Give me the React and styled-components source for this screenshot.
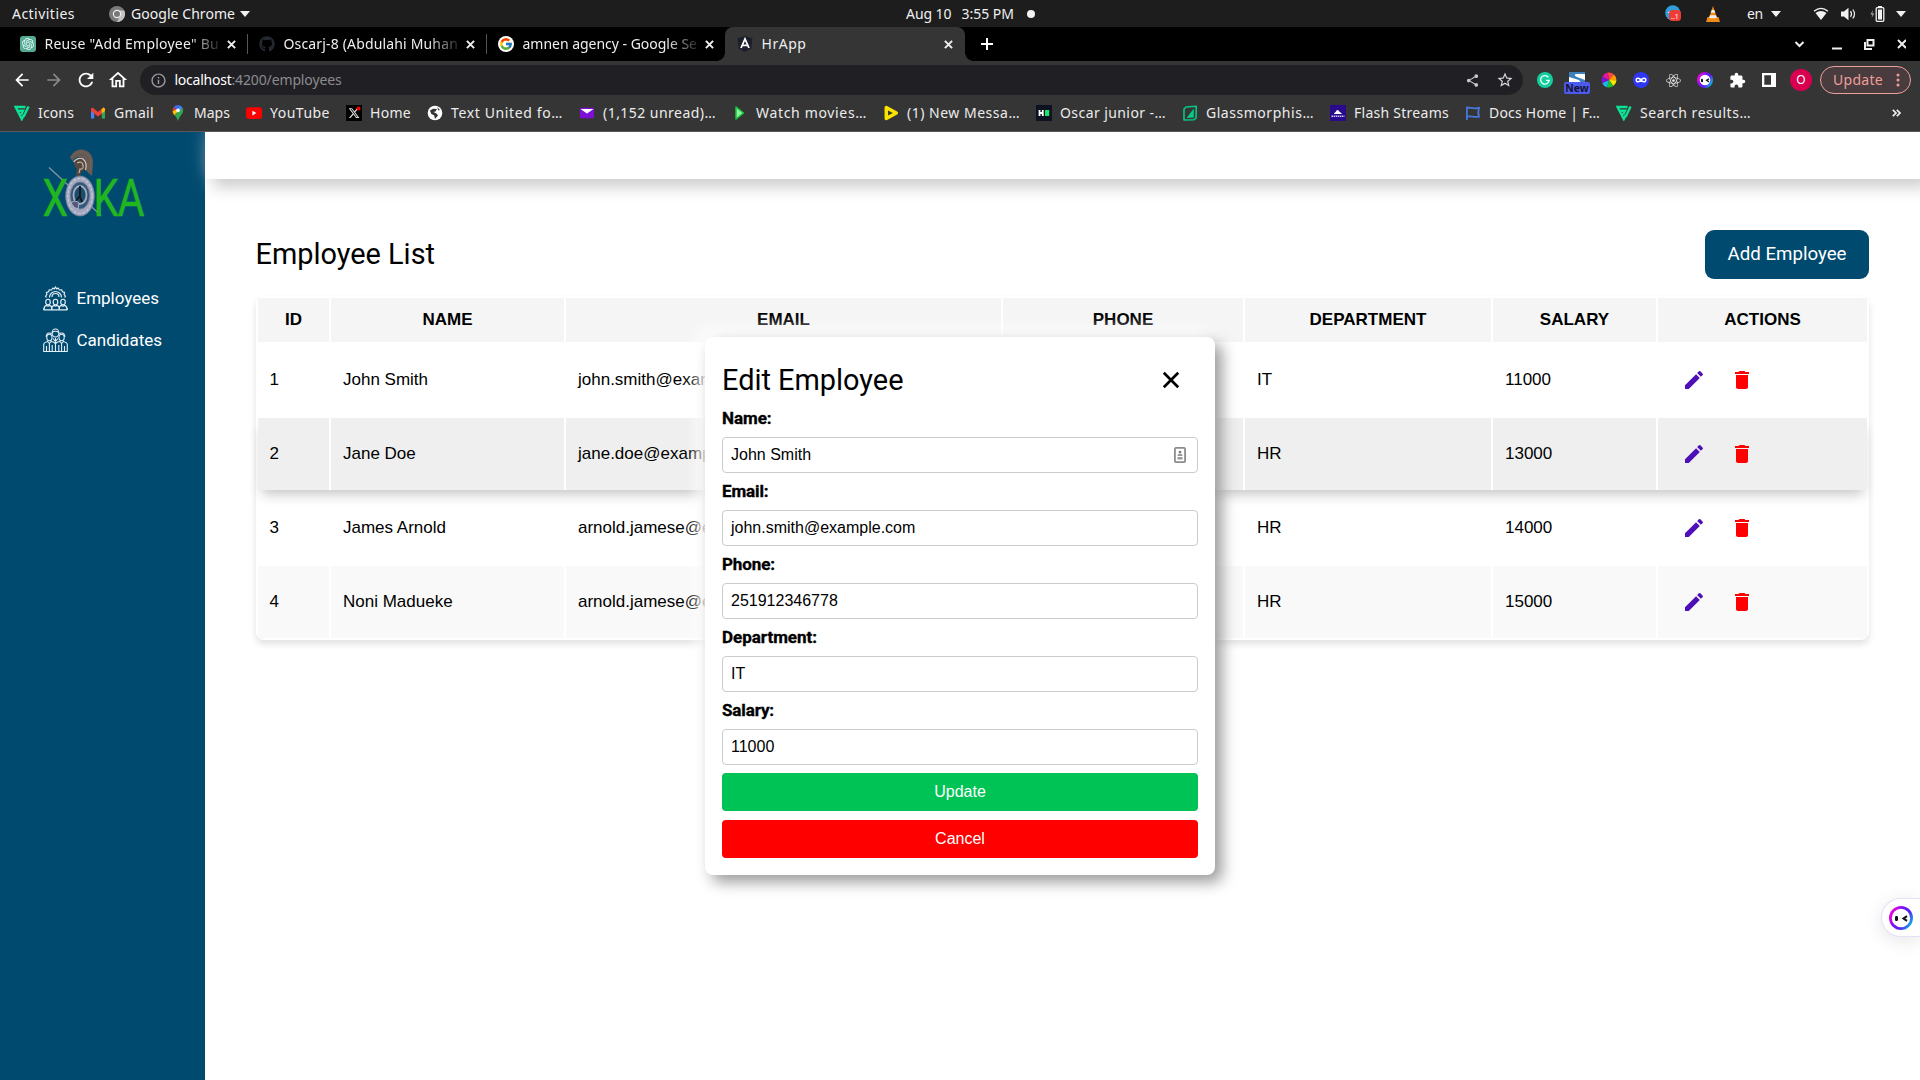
import React, { useLayoutEffect, useRef, useState } from "react";
import styled, { createGlobalStyle, css } from "styled-components";
import { MdEdit, MdDelete, MdArrowBack, MdArrowForward, MdRefresh, MdOutlineHome, MdOutlineInfo, MdShare, MdStarBorder, MdExtension } from "react-icons/md";
import { FaGithub, FaReact, FaXTwitter } from "react-icons/fa6";
import { FcGoogle } from "react-icons/fc";
import { SiOpenai } from "react-icons/si";

const GlobalStyle = createGlobalStyle`
  *, *::before, *::after { box-sizing: border-box; }
  body { margin: 0; background: #fff; overflow: hidden; }
  svg { display: block; flex: none; }
`;

const ui = '"Noto Sans", "Open Sans", sans-serif';
const sans = '"Liberation Sans", Arial, sans-serif';
const roboto = 'Roboto, "Liberation Sans", sans-serif';

/* ---------- text that is tracked to fill a given width ---------- */

const FitBox = styled.span`
  display: block;
  flex: none;
  width: ${(p) => p.$w}px;
  white-space: pre;
`;

function Fit({ w, children, className }) {
  const ref = useRef(null);
  const [spacing, setSpacing] = useState(0);
  useLayoutEffect(() => {
    const natural = ref.current.getBoundingClientRect().width;
    setSpacing((w - natural) / String(children).length);
  }, [w, children]);
  return (
    <FitBox $w={w} className={className}>
      <span ref={ref} style={{ letterSpacing: spacing }}>{children}</span>
    </FitBox>
  );
}

/* ---------- shell ---------- */

const Screen = styled.div`
  position: relative;
  display: flex;
  flex-direction: column;
  width: 1920px;
  height: 1080px;
  overflow: hidden;
  background: #fff;
`;

const Group = styled.div`
  display: flex;
  align-items: center;
  gap: ${(p) => p.$gap || 0}px;
`;

const Gap = styled.div`
  flex: none;
  width: ${(p) => p.$w}px;
`;

/* ---------- desktop bar ---------- */

const DesktopBar = styled.header`
  display: grid;
  grid-template-columns: 906px 1fr auto;
  align-items: center;
  height: 27px;
  padding-right: 14px;
  background: #1d1d1d;
  color: #f0f0f0;
  font: 14px/26px ${ui};
`;

const Dot = styled.i`
  width: 8px;
  height: 8px;
  border-radius: 50%;
  background: #f2f2f2;
`;

const Caret = styled.i`
  border: 5px solid transparent;
  border-top: 6px solid #f2f2f2;
  border-bottom: 0;
`;

/* ---------- tab strip ---------- */

const TabStrip = styled.div`
  display: flex;
  align-items: center;
  height: 34px;
  padding-left: 8px;
  background: #000;
  color: #eee;
  font: 14px/34px ${ui};
`;

const Tab = styled.div`
  position: relative;
  display: flex;
  align-items: center;
  width: ${(p) => p.$w}px;
  height: 34px;
  padding-left: 12px;
  ${(p) =>
    p.$active &&
    css`
      border-radius: 8px 8px 0 0;
      background: #353535;
      &::before,
      &::after {
        content: "";
        position: absolute;
        bottom: 0;
        width: 8px;
        height: 8px;
      }
      &::before {
        left: -8px;
        background: radial-gradient(circle at 0 0, transparent 7.5px, #353535 8px);
      }
      &::after {
        right: -8px;
        background: radial-gradient(circle at 100% 0, transparent 7.5px, #353535 8px);
      }
    `}
  ${(p) =>
    p.$divided &&
    css`
      &::after {
        content: "";
        position: absolute;
        right: -1px;
        top: 7px;
        width: 1px;
        height: 20px;
        background: #555;
      }
    `}
`;

const TabTitle = styled.div`
  width: 175px;
  margin: 0 7.5px 0 8.5px;
  overflow: hidden;
  ${(p) => p.$fade && "mask-image: linear-gradient(90deg, #000 82%, rgba(0,0,0,.12));"}
`;

/* ---------- toolbar ---------- */

const Toolbar = styled.div`
  display: flex;
  align-items: center;
  height: 38px;
  padding-left: 12px;
  background: #353535;
  color: #fff;
  font: 14px/30px ${ui};
`;

const Address = styled.div`
  display: flex;
  align-items: center;
  width: 1383px;
  height: 30px;
  padding: 0 9px 0 10px;
  border-radius: 15px;
  background: #202024;
  color: #8b8b8f;
`;

const Host = styled(Fit)`
  color: #fff;
`;

const Spacer = styled.div`
  flex: 1;
`;

const Extension = styled.div`
  display: flex;
  justify-content: center;
  align-items: center;
  width: 32px;
  height: 30px;
`;

const NewBadgeWrap = styled.div`
  display: flex;
  flex-direction: column;
  align-items: center;
  padding-top: 5px;
`;

const NewBadge = styled.b`
  width: 26px;
  height: 12px;
  margin-top: -6px;
  z-index: 1;
  border-radius: 2px;
  background: #4c5af0;
  color: #15152b;
  text-align: center;
  font: bold 10.5px/12px ${ui};
`;

const Avatar = styled.div`
  width: 22px;
  height: 22px;
  border-radius: 50%;
  background: #d8004f;
  color: #fff;
  text-align: center;
  font: 12px/22px ${ui};
`;

const UpdatePill = styled.div`
  display: flex;
  align-items: center;
  width: 91px;
  height: 28px;
  margin-left: 3px;
  padding-left: 12px;
  border: 1px solid #f0a09c;
  border-radius: 14px;
  background: #493c3e;
  color: #ee9f9a;
  font: 14px/26px ${ui};
`;

const Bookmarks = styled.div`
  position: relative;
  z-index: 1;
  display: flex;
  align-items: center;
  gap: 16px;
  height: 33px;
  padding: 0 19px 5px 14px;
  border-bottom: 1px solid #5b5759;
  background: #353535;
  color: #ececec;
  font: 14px/27px ${ui};
`;

/* ---------- application ---------- */

const Body = styled.div`
  display: flex;
  flex: 1;
`;

const Sidebar = styled.aside`
  display: flex;
  flex-direction: column;
  width: 205px;
  padding: 17px 0 0 41px;
  background: #004a70;
`;

const NavList = styled.nav`
  display: flex;
  flex-direction: column;
  gap: 17px;
  margin: 67px 0 0 2px;
`;

const NavItem = styled.a`
  display: flex;
  align-items: center;
  gap: 8.5px;
  height: 25px;
  color: #fff;
  font: 17px/25px ${roboto};
`;

const Main = styled.main`
  display: flex;
  flex: 1;
  flex-direction: column;
`;

const TopPanel = styled.div`
  height: 47px;
  background: #fff;
  box-shadow: 8px 8px 15px #ccc, -6px -6px 12px rgba(255, 255, 255, 0.12);
`;

const Content = styled.section`
  padding: 51px 51px 0 51px;
`;

const ContentHead = styled.div`
  display: flex;
  justify-content: space-between;
  align-items: center;
  height: 49px;
  margin-bottom: 17px;
`;

const Title = styled.h2`
  margin: 0 0 0 -0.5px;
  padding-bottom: 2px;
  color: #000;
  font: 400 28.9px/34px ${roboto};
`;

const DialogTitle = styled(Title)`
  margin-left: 0;
  padding-bottom: 0;
`;

const AddButton = styled.button`
  width: 164px;
  height: 49px;
  padding: 0 0 1px;
  border: 0;
  border-radius: 9px;
  background: #004a70;
  color: #fff;
  font: 18.7px/48px ${roboto};
`;

const Table = styled.table`
  width: 1613px;
  table-layout: fixed;
  border-collapse: separate;
  border-spacing: 2px;
  border-radius: 8px;
  box-shadow: 0 4px 7px rgba(0, 0, 0, 0.12);
  color: #000;
  font: 17px/20px ${sans};
`;

const Col = styled.col`
  width: ${(p) => p.$w}px;
`;

const Th = styled.th`
  height: 44px;
  padding: 0;
  background: #f5f5f5;
  font-weight: bold;
`;

const Row = styled.tr`
  ${(p) => p.$raised && "box-shadow: 0 8px 12px -4px rgba(0,0,0,.24);"}
  td {
    background: ${(p) => p.$bg};
  }
`;

const Td = styled.td`
  height: 72px;
  padding: 0 12px;
  &:first-child {
    padding-left: 11.5px;
  }
  &:last-child {
    padding-left: 11.5px;
  }
`;

const IconButton = styled.span`
  display: flex;
  justify-content: center;
  align-items: center;
  width: 48px;
  height: 48px;
  color: ${(p) => p.$color};
`;

/* ---------- dialog ---------- */

const Dialog = styled.div`
  position: absolute;
  left: 705px;
  top: 337px;
  display: flex;
  flex-direction: column;
  width: 510px;
  height: 538px;
  padding: 17px;
  border-radius: 8px;
  background: #fff;
  box-shadow: 7px 7px 15px #9a9a9a, -7px -7px 15px #fff;
`;

const DialogHead = styled.div`
  display: flex;
  flex: none;
  justify-content: space-between;
  align-items: center;
  height: 52px;
  padding-right: 18px;
`;

const Field = styled.label`
  display: flex;
  flex: none;
  flex-direction: column;
  height: 73px;
  color: #000;
  font: bold 17px/24px ${roboto};
`;

const FieldName = styled(Fit)`
  -webkit-text-stroke: 0.35px #000;
`;

const InputBox = styled.div`
  display: flex;
  justify-content: space-between;
  align-items: center;
  height: 36px;
  margin-top: 7px;
  padding: 0 11px 0 8px;
  border: 1px solid #ccc;
  border-radius: 4px;
  font: 16px/34px ${sans};
`;

const Actions = styled.div`
  display: flex;
  flex-direction: column;
  gap: 9px;
  margin-top: 2px;
`;

const ActionButton = styled.button`
  height: 38px;
  padding: 0;
  border: 0;
  border-radius: 4px;
  background: ${(p) => p.$bg};
  color: #fff;
  font: 16px/36px ${sans};
`;

const Assistant = styled.div`
  position: absolute;
  left: 1881px;
  top: 898px;
  display: flex;
  align-items: center;
  width: 39px;
  height: 39px;
  padding-left: 7px;
  border: 1px solid #e4e2f6;
  border-right: 0;
  border-radius: 20px 0 0 20px;
  background: #fff;
  box-shadow: 0 4px 18px rgba(0, 0, 0, 0.1);
`;

/* ---------- drawings ---------- */

const Cross = ({ size = 9, sw = 2, color = "#eee" }) => (
  <svg width={size} height={size} viewBox="0 0 10 10" stroke={color} strokeWidth={(sw * 10) / size}>
    <path d="M1 1l8 8M9 1l-8 8" />
  </svg>
);

const FlatLogo = () => (
  <svg width="16" height="16" viewBox="0 0 16 16" fill="none" stroke="#0be295" strokeWidth="2.4">
    <path d="M11.5 2H1.6L7.8 14l2.2-4.2M4 5.8h5L7 9.6" />
    <path d="M14.6 1.4L9.6 11.8" />
  </svg>
);

const GmailIcon = () => (
  <svg width="16" height="16" viewBox="0 0 16 16">
    <path d="M1 4v9.5h3.2V6.8z" fill="#4285f4" />
    <path d="M11.8 6.8v6.7H15V4z" fill="#34a853" />
    <path d="M1 3.5L2.6 2.6 8 7V11.5L1 6z" fill="#ea4335" />
    <path d="M15 3.5L13.4 2.6 8 7v4.5l4-3z" fill="#ea4335" />
    <path d="M11.8 4.2L13.4 2.6 15 3.6V6l-3.2 2.5z" fill="#fbbc04" />
  </svg>
);

const MapsIcon = () => (
  <svg width="16" height="16" viewBox="0 0 16 16">
    <path d="M8 0a5.3 5.3 0 0 0-4.2 2L6 4.6 10 .4A6 6 0 0 0 8 0z" fill="#3d6cf0" />
    <path d="M3.8 2A5.2 5.2 0 0 0 2.6 6l3.6-1.5z" fill="#e0352b" />
    <path d="M10 .5L6 5.2A2.6 2.6 0 0 0 8 8l4.6-5C12 1.8 11 .9 10 .5z" fill="#4285f4" />
    <path d="M2.6 6c0 1.6.6 2.8 1.8 4.3L8 6.8 6 4.6z" fill="#fbbc04" />
    <path d="M12.7 3c1 2.6.6 4.6-1.7 7.2C9.5 12 8.9 13.5 8 16c-.9-2.5-1.5-3.8-3.6-5.7z" fill="#2fa84f" />
    <circle cx="8" cy="5.3" r="1.9" fill="#fff" />
  </svg>
);

const YouTubeIcon = () => (
  <svg width="16" height="16" viewBox="0 0 16 16">
    <rect y="2.3" width="16" height="11.6" rx="3" fill="#f00" />
    <path d="M6.4 5.8v4.6l4-2.3z" fill="#fff" />
  </svg>
);

const XBox = styled.div`
  display: flex;
  justify-content: center;
  align-items: center;
  width: 16px;
  height: 16px;
  background: #000;
  color: #ddd;
`;

const XIcon = () => (
  <XBox>
    <svg width="16" height="16" viewBox="0 0 16 16">
      <FaXTwitter x="2" y="2" size={12} />
      <circle cx="12.5" cy="3.5" r="2" fill="#f00" />
    </svg>
  </XBox>
);

const GlobeIcon = () => (
  <svg width="16" height="16" viewBox="0 0 16 16">
    <circle cx="8" cy="8" r="7.3" fill="#fff" />
    <path d="M3 5.5l3-1.8 4 .3-1.5 2.5L6.5 7l3 1.5 1.5 2L8 14l-.8-3.5-3-1.8zM10 2l3 3-1.6.5z" fill="#353535" />
  </svg>
);

const MailIcon = () => (
  <svg width="16" height="16" viewBox="0 0 16 16">
    <rect x="1" y="2.8" width="14" height="10.4" rx="1" fill="#7e0fd6" />
    <path d="M1.5 4h13L8 8.6z" fill="#fff" />
  </svg>
);

const PlayIcon = () => (
  <svg width="16" height="16" viewBox="0 0 16 16">
    <path d="M4 2l7.5 6L4 14z" fill="#8ff5a0" stroke="#14c83a" strokeWidth="1.5" strokeLinejoin="round" />
  </svg>
);

const YellowIcon = () => (
  <svg width="16" height="16" viewBox="0 0 16 16">
    <path d="M3.3 2.5l10 5.5-10 5.5z" fill="none" stroke="#fbe200" strokeWidth="3.5" strokeLinejoin="round" />
  </svg>
);

const HackerIcon = () => (
  <svg width="16" height="16" viewBox="0 0 16 16">
    <rect width="16" height="16" fill="#0c1220" />
    <path d="M3.5 5v6M6.8 5v6M3.5 8h3.3" stroke="#fff" strokeWidth="1.8" />
    <rect x="9" y="5" width="4.2" height="6" fill="#1be36b" />
  </svg>
);

const GlassIcon = () => (
  <svg width="16" height="16" viewBox="0 0 16 16">
    <path d="M4 2L14.3 1.2 14 13.2l-2 1.5-10 .3L2 4z" fill="none" stroke="#0ac787" strokeWidth="1.6" strokeLinejoin="round" />
    <path d="M11.800 3.5V12.5L4.5 13z" fill="#0ac787" />
  </svg>
);

const FlashIcon = () => (
  <svg width="16" height="16" viewBox="0 0 16 16">
    <rect width="16" height="16" fill="#2a0a8c" />
    <path d="M4 9c.5-1.5 1.5-1.5 2.5-3.5q1-1 2 0c1 1.5 2.5 2 3.5 3.5z" fill="#fff" />
    <path d="M1.5 11.2h13" stroke="#cfc8ee" strokeWidth="1.4" strokeDasharray="1.5 .6" />
  </svg>
);

const DocsIcon = () => (
  <svg width="16" height="16" viewBox="0 0 16 16" fill="none" stroke="#4677d8" strokeWidth="1.8">
    <path d="M1.9 1.5v13.5M2 3c3-1.2 5 1.5 12 0-1 3-1 6 0 8.7-5 1-8-1.2-12 0" />
  </svg>
);

const GreenIcon = () => (
  <svg width="16" height="16" viewBox="0 0 16 16">
    <circle cx="8" cy="8" r="8" fill="#12cf9d" />
    <path d="M11.4 5.3A4.3 4.3 0 1 0 12.2 8.3H9" fill="none" stroke="#fff" strokeWidth="1.3" />
  </svg>
);

const SnapIcon = () => (
  <svg width="16" height="16" viewBox="0 0 16 16">
    <rect width="16" height="16" fill="#fff" />
    <path d="M0 0h16v2H8C5 2 5 4 8 5l8 3v8L10 8 0 5z" fill="#3d7fb8" />
  </svg>
);

const wheel = ["#f44", "#ff9d00", "#ffe500", "#18c332", "#21b5ec", "#7a17c9", "#e31797"];
const WheelIcon = () => (
  <svg width="16" height="16" viewBox="0 0 16 16">
    {wheel.map((c, i) => {
      const a = ((i * 360) / 7 - 100) * (Math.PI / 180);
      const b = (((i + 1) * 360) / 7 - 100) * (Math.PI / 180);
      return (
        <path
          key={c}
          fill={c}
          d={`M8 8L${8 + 7.5 * Math.cos(a)} ${8 + 7.5 * Math.sin(a)}A7.5 7.5 0 0 1 ${8 + 7.5 * Math.cos(b)} ${8 + 7.5 * Math.sin(b)}z`}
        />
      );
    })}
  </svg>
);

const InfinityIcon = () => (
  <svg width="16" height="16" viewBox="0 0 16 16">
    <circle cx="8" cy="8" r="8" fill="#2f37f5" />
    <path d="M8 8C6.5 5.8 3.2 5.5 3.2 8S6.5 10.2 8 8s4.8-2.5 4.8 0S9.5 10.2 8 8z" fill="none" stroke="#fff" strokeWidth="1.5" />
  </svg>
);

const FaceIcon = ({ size, ring = 3 }) => (
  <svg width={size} height={size} viewBox="0 0 24 24">
    <defs>
      <linearGradient id={`face${size}`} x1="0" y1=".5" x2=".9" y2="1">
        <stop offset="0" stopColor="#d909e0" />
        <stop offset=".25" stopColor="#7a14f5" />
        <stop offset=".6" stopColor="#5b1af5" />
        <stop offset="1" stopColor="#0eb5e9" />
      </linearGradient>
    </defs>
    <circle cx="12" cy="12" r={12 - ring / 2} fill="#fff" stroke={`url(#face${size})`} strokeWidth={ring} />
    <rect x="6" y="10" width="3" height="5" rx="1.3" fill="#111" />
    <path d="M18 10.2l-3.5 2.3 3.5 2.3" fill="none" stroke="#111" strokeWidth="2" />
  </svg>
);

const PanelIcon = () => (
  <svg width="14" height="14" viewBox="0 0 14 14">
    <path d="M0 0h14v14H0zM2.3 2.3v9.4H9V2.3z" fill="#fff" fillRule="evenodd" />
  </svg>
);

const ChromeMono = () => (
  <svg width="16" height="16" viewBox="0 0 16 16">
    <circle cx="8" cy="8" r="8" fill="#7a7a7a" />
    <path d="M8 4.5h7.2A8 8 0 0 1 8 16l3.2-6z" fill="#c4c4c4" />
    <circle cx="8" cy="8" r="3.6" fill="#777" stroke="#eee" strokeWidth="1.2" />
  </svg>
);

const TelegramIcon = () => (
  <svg width="17" height="17" viewBox="0 0 17 17">
    <circle cx="7.8" cy="7.8" r="7.6" fill="#2da0dc" />
    <path d="M2.5 7.5L7 5.5v4z" fill="#fff" />
    <rect x="4" y="5" width="12" height="11" rx="3.5" fill="#ef3b36" />
    <text x="6" y="14" fontSize="7" fontFamily="Noto Sans" fill="#fff">..1</text>
  </svg>
);

const VlcIcon = () => (
  <svg width="16" height="16" viewBox="0 0 16 16">
    <path d="M2.5 11h11l1.5 5H1z" fill="#f08a14" />
    <path d="M8 0L3.8 12.5q4.2 1.8 8.4 0z" fill="#f08a14" />
    <path d="M6.7 4h2.6l1 2.8H5.7zM4.9 9.2h6.2l.8 2.5q-3.9 1.3-7.800 0z" fill="#eee" />
  </svg>
);

const WifiIcon = () => (
  <svg width="16" height="14" viewBox="0 0 16 14">
    <path d="M1 4.2Q8-1.5 15 4.2" fill="none" stroke="#f2f2f2" strokeWidth="1.4" />
    <path d="M2.5 6Q8 1.8 13.5 6L8 13z" fill="#f2f2f2" />
  </svg>
);

const VolumeIcon = () => (
  <svg width="16" height="14" viewBox="0 0 16 14">
    <path d="M0 4.5h3L7.5.8v12.4L3 9.5H0z" fill="#f2f2f2" />
    <path d="M9.5 4.2q2 2.8 0 5.6M11.8 2.5q3.4 4.5 0 9" fill="none" stroke="#f2f2f2" strokeWidth="1.2" />
  </svg>
);

const BatteryIcon = () => (
  <svg width="15" height="16" viewBox="0 0 15 16">
    <path d="M3 4L.5 8.5h2L1.5 12l2.8-4.5h-2z" fill="#aaa" />
    <path d="M8 0h4v2H8z" fill="#f2f2f2" />
    <rect x="6.2" y="1.7" width="7.6" height="13.6" rx="1" fill="none" stroke="#f2f2f2" strokeWidth="1.3" />
    <rect x="8" y="3.5" width="4" height="10" fill="#f2f2f2" />
  </svg>
);

const AngularIcon = () => (
  <svg width="16" height="16" viewBox="0 0 16 16">
    <path d="M8 0l7.5 2.5-1.2 10L8 16l-6.3-3.5L.5 2.5z" fill="#1c1e2b" />
    <path d="M4 12L8 3l4 9M5.5 9.4h5" fill="none" stroke="#fff" strokeWidth="1.8" />
  </svg>
);

const OpenAiBox = styled.div`
  display: flex;
  justify-content: center;
  align-items: center;
  width: 16px;
  height: 16px;
  border-radius: 3px;
  background: #57a895;
  color: #e6fff8;
`;

const GoogleDisc = styled.div`
  display: flex;
  justify-content: center;
  align-items: center;
  width: 16px;
  height: 16px;
  border-radius: 50%;
  background: #fff;
`;

const Logo = () => (
  <svg width="110" height="70" viewBox="41 149 110 70" overflow="visible">
    <path d="M49 167.5L101 215.5" stroke="#8b95a3" strokeWidth="1.2" />
    <g fontFamily="Roboto, sans-serif" fontSize="52.5" fill="#21b621" stroke="#21b621" strokeWidth=".5">
      <text x="42.5" y="216" textLength="25.5" lengthAdjust="spacingAndGlyphs">X</text>
      <text x="93.5" y="216" textLength="25" lengthAdjust="spacingAndGlyphs">K</text>
      <text x="117.5" y="216" textLength="27" lengthAdjust="spacingAndGlyphs">A</text>
    </g>
    <path d="M70 157.5Q74 149 82 149.5Q93 151 93 163L92 176Q88 173 85.5 170Q87.5 160 81 157.5Q75 156 73 161.5Z" fill="#675a54" />
    <path d="M71.5 157Q76 151.5 82 152Q90.5 153.5 90.5 163L90 172" fill="none" stroke="#7d706a" strokeWidth="1" strokeDasharray="1 1" />
    <path d="M73.5 162Q78 156.5 83 159Q87.5 163 85.5 169.5L82 171 80 175.5 75.5 176 77 169 75 167Z" fill="#54473f" />
    <path d="M73.5 162Q78 156.5 83 159Q87.5 163 85.5 170" fill="none" stroke="#dccfc2" strokeWidth="1.1" />
    <path d="M77 163q5-2.5 6 2t-3 4l-1 4" fill="none" stroke="#c4b29f" strokeWidth="1.2" />
    <ellipse cx="80" cy="196" rx="14.3" ry="20" fill="#a3a7bd" stroke="#777f96" strokeWidth=".8" />
    <ellipse cx="80" cy="196" rx="12.2" ry="17.5" fill="none" stroke="#c6c9da" strokeWidth="1.2" strokeDasharray="3 1.5" />
    <ellipse cx="80" cy="195.5" rx="9.6" ry="13.5" fill="#31587a" stroke="#6c7690" strokeWidth="1" />
    <ellipse cx="80" cy="195" rx="6.5" ry="9" fill="#1d4c6b" stroke="#a5adc0" strokeWidth="1.8" />
    <path d="M80 186v11l2 5M73 204l7-8" stroke="#15181f" strokeWidth="1.8" fill="none" />
    <path d="M71 203q4-4 8 0l-1 6q-4 0-7-6z" fill="#55587f" stroke="#c7cad8" strokeWidth=".8" />
  </svg>
);

const person = (x, y, s = 1) => (
  <g transform={`translate(${x} ${y}) scale(${s})`}>
    <ellipse cx="0" cy="0" rx="2.3" ry="2.8" />
    <path d="M-3.8 7.5V6q0-2 2.5-2.6Q0 4.8 1.3 3.4Q3.8 4 3.8 6v1.5" />
  </g>
);

const EmployeesIcon = () => (
  <svg width="25" height="25" viewBox="0 0 25 25" fill="none" stroke="#e3eef5" strokeWidth="1.15">
    <path d="M3.5 11.5l-1-1.3 1.4-1.7-.5-2 2.2-.7.6-2 2.3.2L9.9 2l1.4.9L12.5 1l1.2 1.9L15.1 2l1.4 2 2.3-.2.6 2 2.2.7-.5 2 1.4 1.7-1 1.3" />
    <path d="M6.5 11.5a6 6 0 0 1 12 0M9 11a3.5 3.5 0 0 1 7 0" />
    {person(5, 16)}
    {person(12.5, 16)}
    {person(20, 16)}
    <path d="M.6 23.9h23.8M.8 22v2M24.2 22v2" />
  </svg>
);

const CandidatesIcon = () => (
  <svg width="25" height="25" viewBox="0 0 25 25" fill="none" stroke="#e3eef5" strokeWidth="1.1">
    <ellipse cx="12.5" cy="5" rx="3.4" ry="4" />
    <path d="M9.2 4.5q3.3-2.5 6.6 0M3.2 9q0-4 3.2-4 1.6 0 2.3 1M21.8 9q0-4-3.2-4-1.6 0-2.3 1" />
    <ellipse cx="6.4" cy="9.5" rx="2.6" ry="3.3" />
    <ellipse cx="18.6" cy="9.5" rx="2.6" ry="3.3" />
    <path d="M.7 23.5V16.5q0-2 4-3l1.7 2 1.7-2q2.5 0 4.4 2 1.9-2 4.4-2l1.7 2 1.7-2q4 1 4 3v7z" />
    <path d="M3.5 18v5.5M6.4 15.5v8M9.2 17v6.5M12.5 10v13.5M15.8 17v6.5M18.6 15.5v8M21.5 18v5.5M10 10.5l2.5 3 2.5-3" />
  </svg>
);

const ContactIcon = () => (
  <svg width="12" height="16" viewBox="0 0 12 16">
    <rect x=".9" y=".9" width="10.2" height="14.2" rx="1" fill="#fff" stroke="#8c8c8c" strokeWidth="1.8" />
    <circle cx="6" cy="5" r="1.3" fill="#777" />
    <path d="M3.5 9q0-2.5 2.5-2.5T8.5 9zM3.5 10h5v2.5h-5z" fill="#999" />
  </svg>
);

/* ---------- data ---------- */

const tabs = [
  { title: 'Reuse "Add Employee" Bu', w: 174.5, width: 239, icon: <OpenAiBox><SiOpenai size={12} /></OpenAiBox>, divided: true },
  { title: "Oscarj-8 (Abdulahi Muhan", w: 174.5, width: 239, icon: <FaGithub size={16} color="#22282e" />, divided: true },
  { title: "amnen agency - Google Se", w: 174.5, width: 239, icon: <GoogleDisc><FcGoogle size={14} /></GoogleDisc> },
  { title: "HrApp", w: 45, width: 240, icon: <AngularIcon />, active: true },
];

const bookmarks = [
  ["Icons", 36, <FlatLogo />],
  ["Gmail", 40, <GmailIcon />],
  ["Maps", 36, <MapsIcon />],
  ["YouTube", 60, <YouTubeIcon />],
  ["Home", 41, <XIcon />],
  ["Text United fo…", 112, <GlobeIcon />],
  ["(1,152 unread)…", 113, <MailIcon />],
  ["Watch movies…", 111, <PlayIcon />],
  ["(1) New Messa…", 113, <YellowIcon />],
  ["Oscar junior -…", 106, <HackerIcon />],
  ["Glassmorphis…", 108, <GlassIcon />],
  ["Flash Streams", 95, <FlashIcon />],
  ["Docs Home | F…", 111, <DocsIcon />],
  ["Search results…", 111, <FlatLogo />],
];

const columns = [
  ["ID", 71],
  ["NAME", 233],
  ["EMAIL", 435],
  ["PHONE", 240],
  ["DEPARTMENT", 246],
  ["SALARY", 163],
  ["ACTIONS", 209],
];

const employees = [
  { id: 1, name: "John Smith", email: "john.smith@example.com", phone: "251912346778", dept: "IT", salary: "11000", bg: "#fff" },
  { id: 2, name: "Jane Doe", email: "jane.doe@example.com", phone: "251912346778", dept: "HR", salary: "13000", bg: "#efefef", raised: true },
  { id: 3, name: "James Arnold", email: "arnold.jamese@example.com", phone: "251912346778", dept: "HR", salary: "14000", bg: "transparent" },
  { id: 4, name: "Noni Madueke", email: "arnold.jamese@example.com", phone: "251912346778", dept: "HR", salary: "15000", bg: "#f9f9f9" },
];

const fields = [
  ["Name:", "John Smith", 49.5],
  ["Email:", "john.smith@example.com", 46.5],
  ["Phone:", "251912346778", 53],
  ["Department:", "IT", 95],
  ["Salary:", "11000", 52],
];

export default function App() {
  return (
    <Screen>
      <GlobalStyle />
      <DesktopBar>
        <Group>
          <Gap $w={12} />
          <Fit w={63}>Activities</Fit>
          <Gap $w={34} />
          <ChromeMono />
          <Gap $w={6} />
          <Fit w={104}>Google Chrome</Fit>
          <Gap $w={5} />
          <Caret />
        </Group>
        <Group>
          <Fit w={45.5}>Aug 10</Fit>
          <Gap $w={10} />
          <Fit w={52.5}>3:55 PM</Fit>
          <Gap $w={13} />
          <Dot />
        </Group>
        <Group>
          <TelegramIcon />
          <Gap $w={23} />
          <VlcIcon />
          <Gap $w={26} />
          <Fit w={16}>en</Fit>
          <Gap $w={8} />
          <Caret />
          <Gap $w={32} />
          <WifiIcon />
          <Gap $w={12} />
          <VolumeIcon />
          <Gap $w={13} />
          <BatteryIcon />
          <Gap $w={11} />
          <Caret />
        </Group>
      </DesktopBar>

      <TabStrip>
        {tabs.map((t) => (
          <Tab key={t.title} $w={t.width} $active={t.active} $divided={t.divided}>
            {t.icon}
            <TabTitle $fade={!t.active}>
              <Fit w={t.w}>{t.title}</Fit>
            </TabTitle>
            <Cross />
          </Tab>
        ))}
        <Gap $w={16} />
        <svg width="12" height="12" viewBox="0 0 12 12" stroke="#fff" strokeWidth="2">
          <path d="M6 0v12M0 6h12" />
        </svg>
        <Spacer />
        <svg width="112" height="12" viewBox="0 0 112 12" fill="none" stroke="#eee" strokeWidth="2">
          <path d="M1.5 4l4 4 4-4" />
          <path d="M38 10.5h10" />
          <path d="M73.5 2h6v5.5h-6zM71 4v7h7" />
          <path d="M104 2l8 8M112 2l-8 8" />
        </svg>
        <Gap $w={14} />
      </TabStrip>

      <Toolbar>
        <MdArrowBack size={20} />
        <Gap $w={12} />
        <MdArrowForward size={20} color="#8a8a8a" />
        <Gap $w={11} />
        <MdRefresh size={22} />
        <Gap $w={10} />
        <MdOutlineHome size={22} />
        <Gap $w={11} />
        <Address>
          <MdOutlineInfo size={17} color="#9a9a9e" />
          <Gap $w={7.5} />
          <Host w={57}>localhost</Host>
          <Fit w={110}>:4200/employees</Fit>
          <Spacer />
          <MdShare size={15} color="#c8c8c8" />
          <Gap $w={16} />
          <MdStarBorder size={18} color="#d8d8d8" />
        </Address>
        <Gap $w={6} />
        <Extension><GreenIcon /></Extension>
        <Extension>
          <NewBadgeWrap>
            <SnapIcon />
            <NewBadge>New</NewBadge>
          </NewBadgeWrap>
        </Extension>
        <Extension><WheelIcon /></Extension>
        <Extension><InfinityIcon /></Extension>
        <Extension><FaReact size={15} color="#e8e8e8" /></Extension>
        <Extension><FaceIcon size={16} ring={4} /></Extension>
        <Extension><MdExtension size={17} /></Extension>
        <Extension><PanelIcon /></Extension>
        <Extension><Avatar>O</Avatar></Extension>
        <UpdatePill>
          <Fit w={50}>Update</Fit>
          <Gap $w={13} />
          <svg width="4" height="14" viewBox="0 0 4 14" fill="#ee9f9a">
            <circle cx="2" cy="2" r="1.5" />
            <circle cx="2" cy="7" r="1.5" />
            <circle cx="2" cy="12" r="1.5" />
          </svg>
        </UpdatePill>
      </Toolbar>

      <Bookmarks>
        {bookmarks.map(([label, w, icon]) => (
          <Group key={label} $gap={8}>
            {icon}
            <Fit w={w}>{label}</Fit>
          </Group>
        ))}
        <Spacer />
        <svg width="9" height="8" viewBox="0 0 9 8" fill="none" stroke="#eee" strokeWidth="1.7">
          <path d="M.8.8L4 4 .8 7.2M4.8.8L8 4 4.8 7.2" />
        </svg>
      </Bookmarks>

      <Body>
        <Sidebar>
          <Logo />
          <NavList>
            <NavItem>
              <EmployeesIcon />
              <Fit w={82.5}>Employees</Fit>
            </NavItem>
            <NavItem>
              <CandidatesIcon />
              <Fit w={85.5}>Candidates</Fit>
            </NavItem>
          </NavList>
        </Sidebar>
        <Main>
          <TopPanel />
          <Content>
            <ContentHead>
              <Title>Employee List</Title>
              <AddButton>Add Employee</AddButton>
            </ContentHead>
            <Table>
              <colgroup>
                {columns.map(([name, w]) => (
                  <Col key={name} $w={w} />
                ))}
              </colgroup>
              <thead>
                <tr>
                  {columns.map(([name]) => (
                    <Th key={name}>{name}</Th>
                  ))}
                </tr>
              </thead>
              <tbody>
                {employees.map((e) => (
                  <Row key={e.id} $bg={e.bg} $raised={e.raised}>
                    <Td>{e.id}</Td>
                    <Td>{e.name}</Td>
                    <Td>{e.email}</Td>
                    <Td>{e.phone}</Td>
                    <Td>{e.dept}</Td>
                    <Td>{e.salary}</Td>
                    <Td>
                      <Group>
                        <IconButton $color="#4f0fb8"><MdEdit size={24} /></IconButton>
                        <IconButton $color="#f00"><MdDelete size={24} /></IconButton>
                      </Group>
                    </Td>
                  </Row>
                ))}
              </tbody>
            </Table>
          </Content>
        </Main>
      </Body>

      <Dialog>
        <DialogHead>
          <DialogTitle>Edit Employee</DialogTitle>
          <Cross size={18} sw={2.7} color="#000" />
        </DialogHead>
        {fields.map(([label, value, w], i) => (
          <Field key={label}>
            <FieldName w={w}>{label}</FieldName>
            <InputBox>
              {value}
              {i === 0 && <ContactIcon />}
            </InputBox>
          </Field>
        ))}
        <Actions>
          <ActionButton $bg="#00c355">Update</ActionButton>
          <ActionButton $bg="#f00">Cancel</ActionButton>
        </Actions>
      </Dialog>

      <Assistant>
        <FaceIcon size={24} ring={2.8} />
      </Assistant>
    </Screen>
  );
}
